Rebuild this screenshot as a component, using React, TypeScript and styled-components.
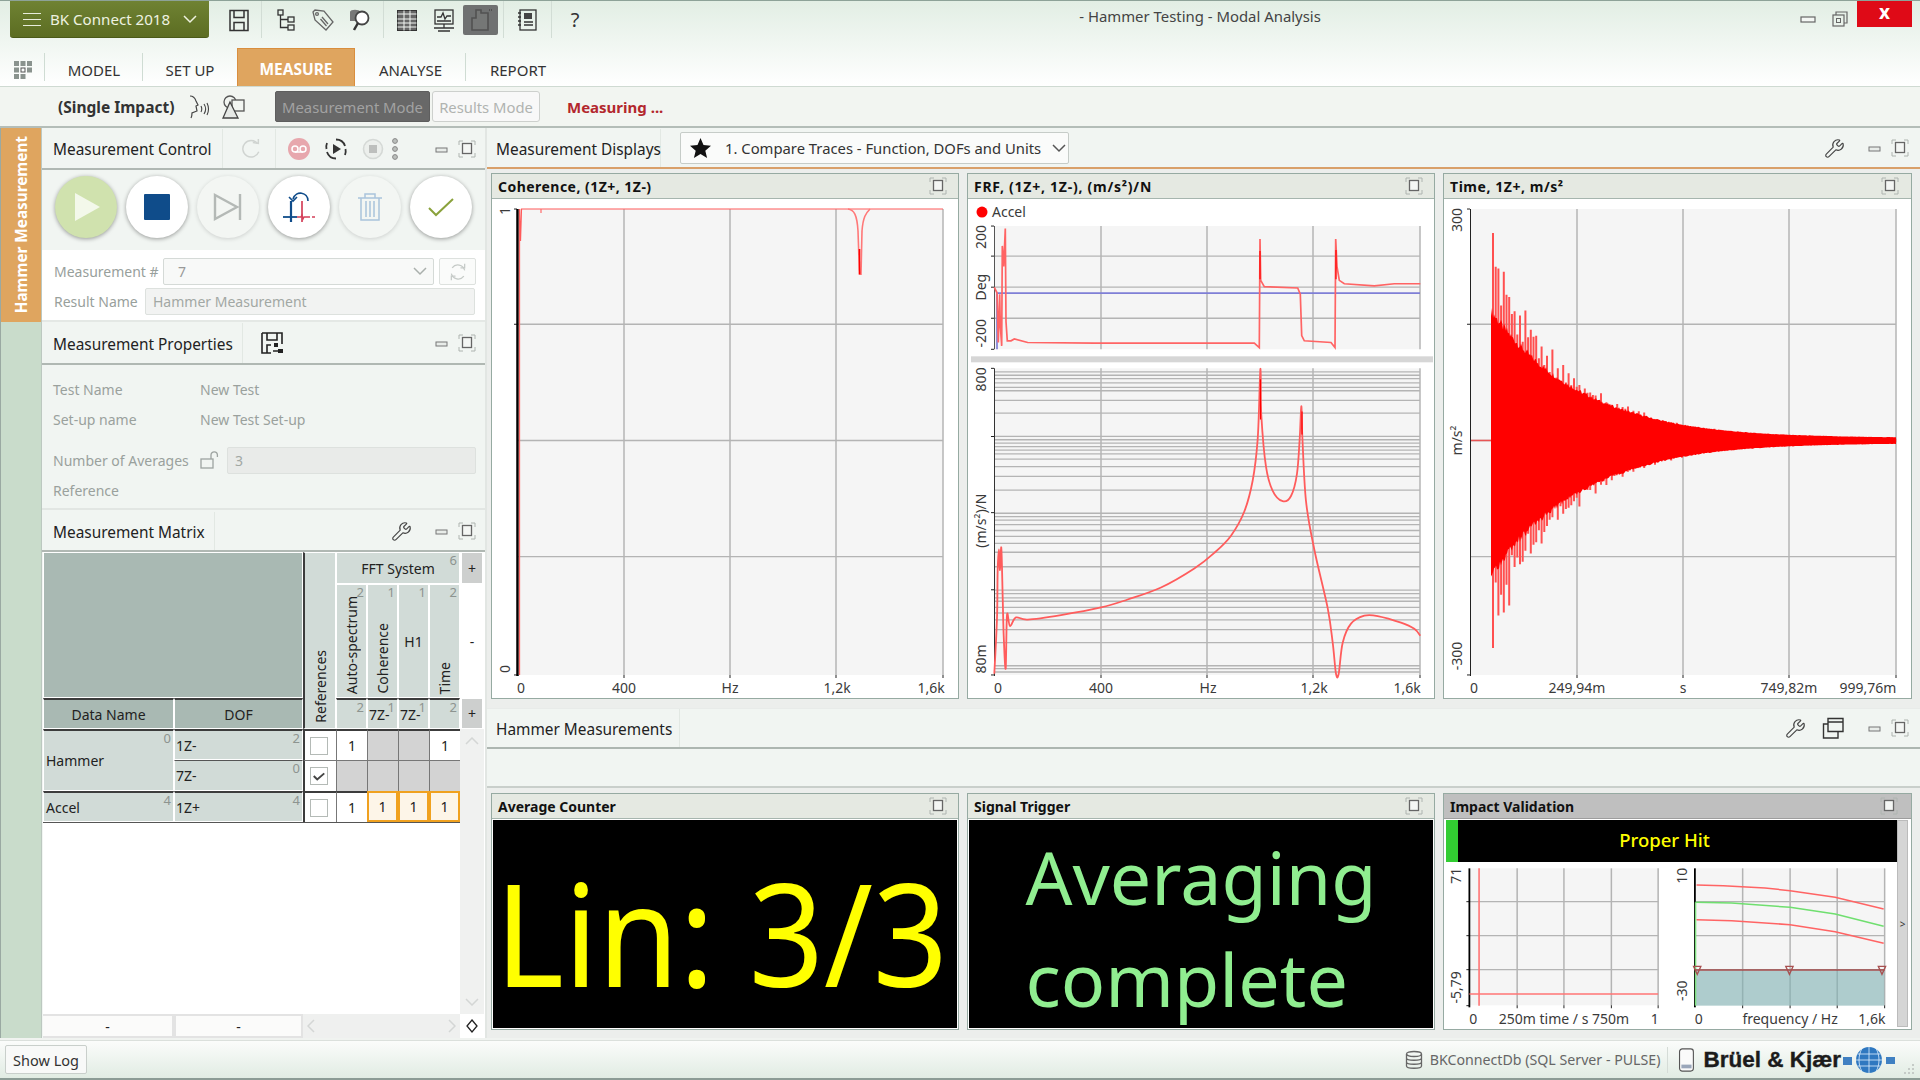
import React, { useMemo } from 'react';
import styled, { createGlobalStyle } from 'styled-components';
import { Wrench } from 'lucide-react';

const FONT = '"Noto Sans", "Open Sans", "Liberation Sans", sans-serif';

const Global = createGlobalStyle`
  html, body { margin: 0; padding: 0; background: #f0f3f0; }
  * { box-sizing: border-box; }
  body { font-family: ${FONT}; }
`;

const Root = styled.div`
  width: 1920px; height: 1080px; overflow: hidden;
  display: flex; flex-direction: column;
  font-family: ${FONT}; font-size: 14px; color: #222;
`;

/* ---------- top ---------- */
const TopBar = styled.header`
  height: 87px; flex: none;
  background: linear-gradient(#e2eee4, #fff);
  border-top: 1px solid #8da298;
  border-bottom: 1px solid #cfdad2;
  display: flex; flex-direction: column;
`;
const TitleRow = styled.div`
  height: 47px; display: flex; align-items: flex-start;
`;
const MenuButton = styled.div`
  margin-left: 10px; width: 199px; height: 37px;
  background: linear-gradient(#6f8233, #5c6d22);
  border-bottom: 1px solid #4a5a18;
  border-radius: 0 0 3px 3px;
  color: #eef2e0; font-size: 15.1px;
  display: flex; align-items: center; gap: 9px; padding-left: 13px;
`;
const Burger = styled.span`
  width: 18px; height: 13px; flex: none;
  border-top: 1px solid #e8eddc; border-bottom: 1px solid #e8eddc; position: relative;
  &::after { content: ''; position: absolute; left: 0; right: 0; top: 5px; border-top: 1px solid #e8eddc; }
`;
const Chevron = styled.svg`
  width: 14px; height: 9px; margin-left: 4px; flex: none;
`;
const QuickTools = styled.div`
  display: flex; align-items: center; height: 37px; padding-left: 7px; width: 391px; flex: none;
`;
const ToolSlot = styled.div<{ $w: number; $dark?: boolean; $sep?: boolean }>`
  width: ${p => p.$w}px; height: ${p => (p.$dark ? 30 : 37)}px; flex: none;
  display: flex; align-items: center; justify-content: center;
  background: ${p => (p.$dark ? '#6f7171' : 'transparent')};
  border-radius: ${p => (p.$dark ? '2px' : '0')};
  border-right: ${p => (p.$sep ? '1px solid #d2ddd5' : '0')};
  color: #333; font-size: 20px;
`;
const WindowTitle = styled.div`
  flex: 1; text-align: center; padding-top: 5px; font-size: 14.9px; color: #444;
`;
const WindowControls = styled.div`
  display: flex; align-items: flex-start; width: 120px; flex: none;
`;
const WinIcon = styled.svg`
  width: 16px; height: 16px; margin: 10px 16px 0 0; flex: none;
  &:nth-child(2) { margin-right: 9px; }
`;
const CloseButton = styled.div`
  width: 55px; height: 26px; background: #df0a17; color: #fff; font-weight: 700; font-size: 19px;
  display: flex; align-items: center; justify-content: center; line-height: 1; padding-bottom: 3px;
`;
const TabRow = styled.nav`
  height: 38px; display: flex; align-items: stretch;
`;
const TabSlot = styled.div<{ $w: number; $sep?: boolean }>`
  width: ${p => p.$w}px; flex: none; position: relative; padding-top: 6px;
  display: flex; align-items: center; justify-content: center;
  font-size: 15px; color: #333;
  &::after {
    content: ''; position: absolute; right: 0; top: 5px; bottom: 5px;
    border-right: ${p => (p.$sep ? '1px solid #cfdcd3' : '0')};
  }
`;
const ActiveTab = styled.div`
  width: 118px; flex: none; background: #dfa55f; border: 1px solid #d98e3e; border-bottom: 0;
  color: #fff; font-weight: 700; font-size: 15.5px; padding-top: 2px;
  display: flex; align-items: center; justify-content: center;
`;
const ModeRow = styled.div`
  height: 41px; flex: none; background: #f2f5f1; border-bottom: 2px solid #b4bdb8;
  display: flex; align-items: center; padding-left: 58px;
`;
const ModeName = styled.div`
  font-weight: 700; font-size: 15.5px; width: 126px; color: #333; white-space: nowrap;
`;
const ModeIcon = styled.svg`
  width: 26px; height: 26px; flex: none; margin-right: 11px;
`;
const ModeDark = styled.div`
  margin-left: 17px; width: 155px; height: 31px; background: #686868; border: 1px solid #5e5e5e; border-radius: 2px;
  color: #a2a2a2; font-size: 14.8px; display: flex; align-items: center; justify-content: center; white-space: nowrap;
`;
const ModeLight = styled.div`
  margin-left: 2px; width: 108px; height: 31px; background: #f8f8f8; border: 1px solid #cdd0cd; border-radius: 3px;
  color: #b0b3b0; font-size: 14.8px; display: flex; align-items: center; justify-content: center; white-space: nowrap;
`;
const Measuring = styled.div`
  margin-left: 27px; color: #b3272d; font-weight: 700; font-size: 15px;
`;

/* ---------- main ---------- */
const Main = styled.main`
  flex: 1; min-height: 0; display: flex; align-items: stretch;
`;
const SideStrip = styled.aside`
  width: 42px; flex: none; display: flex; flex-direction: column;
  background: #c9dccb; border-left: 1px solid #9aa9a2; border-right: 1px solid #bcc8c0;
`;
const SideTab = styled.div`
  height: 194px; background: #dfa55f; color: #fff; font-weight: 700; font-size: 15.3px;
  display: flex; align-items: center; justify-content: center;
  span { writing-mode: vertical-rl; transform: rotate(180deg); white-space: nowrap; }
`;
const LeftPanel = styled.section`
  width: 445px; flex: none; display: flex; flex-direction: column;
  background: #f1f5f2; border-right: 2px solid #e2e6e3;
`;
const PanelHead = styled.div<{ $h: number; $pt?: number }>`
  height: ${p => p.$h}px; flex: none; display: flex; align-items: center;
  padding-top: ${p => p.$pt || 0}px;
  background: #f1f5f2; border-bottom: 2px solid #b0b8b3;
`;
const HeadTitle = styled.div<{ $w: number; $pl?: number; $pt?: number }>`
  width: ${p => p.$w}px; flex: none; height: 100%; padding-left: ${p => p.$pl ?? 11}px; padding-top: ${p => p.$pt || 0}px;
  display: flex; align-items: center; font-size: 15.4px; color: #222; white-space: nowrap;
  border-right: 1px solid #e2e8e3;
`;
const HeadIcon = styled.div<{ $w: number; $sep?: boolean; $pl?: number }>`
  width: ${p => p.$w}px; flex: none; height: 100%;
  padding-left: ${p => p.$pl || 0}px;
  display: flex; align-items: center; justify-content: center;
  border-right: ${p => (p.$sep ? '1px solid #e2e8e3' : '0')};
`;
const Spacer = styled.div`flex: 1;`;
const RoundRow = styled.div`
  height: 80px; flex: none; padding: 6px 0 0 13px; display: flex; gap: 9px;
`;
const RoundButton = styled.div<{ $bg?: string; $muted?: boolean }>`
  width: 62px; height: 62px; border-radius: 50%; flex: none;
  background: ${p => p.$bg || '#fff'};
  box-shadow: 0 1px 4px rgba(0,0,0,${p => (p.$muted ? 0.15 : 0.38)});
  display: flex; align-items: center; justify-content: center;
`;
const FormBlock = styled.div`
  height: 72px; flex: none; background: #fff; padding: 8px 9px 0 12px;
  display: flex; flex-direction: column; gap: 3px;
  border-bottom: 2px solid #e4e8e5;
`;
const FormLine = styled.div`
  display: flex; align-items: center; height: 27px; color: #98a09c; font-size: 14px;
`;
const LineLabel = styled.div<{ $w: number }>`
  width: ${p => p.$w}px; flex: none; white-space: nowrap;
`;
const SelectBox = styled.div`
  width: 271px; height: 27px; border: 1px solid #d5dad7; border-radius: 2px; background: #f8f9f8;
  display: flex; align-items: center; justify-content: space-between; padding: 0 6px 0 14px; color: #999;
`;
const SquareButton = styled.div`
  margin-left: 5px; width: 37px; height: 27px; border: 1px solid #dde1de; border-radius: 2px;
  display: flex; align-items: center; justify-content: center; background: #fafbfa;
`;
const ReadBox = styled.div<{ $w: number; $bg?: string }>`
  width: ${p => p.$w}px; height: 27px; background: ${p => p.$bg || '#f2f3f2'}; border: 1px solid #dde1de; border-radius: 2px;
  display: flex; align-items: center; padding-left: 7px; color: #a2a8a4;
`;
const PropsBody = styled.div`
  height: 145px; flex: none; padding: 9px 9px 0 11px; color: #9aa19d; font-size: 14px;
  border-bottom: 2px solid #e2e6e3;
`;
const PropLine = styled.div<{ $h: number; $mt?: number }>`
  display: flex; align-items: center; height: ${p => p.$h}px; margin-top: ${p => p.$mt || 0}px;
`;
const LockSlot = styled.div`
  width: 27px; flex: none; display: flex;
`;

/* matrix */
const Matrix = styled.div`
  flex: 1; min-height: 0; margin-left: 1px; display: grid; background: #fff;
  grid-template-columns: 131px 129px 33px 31px 31px 31px 31px 24px;
  grid-template-rows: 32px 114px 31px 31px 31px 31px 1fr 24px;
`;
const Cell = styled.div<{ $c: string; $r: string; $bg?: string; $top?: boolean; $left?: boolean; $thin?: boolean; $pad?: string; $align?: string; $start?: boolean }>`
  grid-column: ${p => p.$c}; grid-row: ${p => p.$r};
  position: relative; background: ${p => p.$bg || '#d1dbd7'};
  border: 1px solid #fff;
  border-top: ${p => (p.$top ? '2px solid #3c3c3c' : p.$thin ? '1px solid #555' : '1px solid #fff')};
  border-left: ${p => (p.$left ? '2px solid #3c3c3c' : '1px solid #fff')};
  display: flex; align-items: ${p => p.$align || 'center'}; justify-content: ${p => (p.$start ? 'flex-start' : 'center')};
  padding: ${p => p.$pad || '0'};
  font-size: 14px; color: #222; white-space: nowrap;
`;
const Vertical = styled.span`
  writing-mode: vertical-rl; transform: rotate(180deg); font-size: 14px;
`;
const Count = styled.span`
  position: absolute; right: 2px; top: 0; font-size: 13px; line-height: 15px; color: #8d9490;
`;
const ValueCell = styled.div<{ $c: number; $r: number; $hit?: boolean; $empty?: boolean; $top?: boolean }>`
  grid-column: ${p => p.$c}; grid-row: ${p => p.$r};
  background: ${p => (p.$empty ? '#d3d3d3' : p.$hit ? '#fdf5e8' : '#fff')};
  border: ${p => (p.$hit ? '2px solid #f0a11f' : '0')};
  border-top: ${p => (p.$hit ? '2px solid #f0a11f' : p.$top ? '2px solid #3c3c3c' : '1px solid #777')};
  border-left: ${p => (p.$hit ? '2px solid #f0a11f' : '1px solid #777')};
  display: flex; align-items: center; justify-content: center; font-size: 14px;
`;
const CheckCell = styled.div<{ $r: number; $top?: boolean }>`
  grid-column: 3; grid-row: ${p => p.$r}; background: #fff;
  border-left: 2px solid #3c3c3c; padding-right: 4px;
  border-top: ${p => (p.$top ? '2px solid #3c3c3c' : '1px solid #777')};
  display: flex; align-items: center; justify-content: center;
`;
const CheckBox = styled.div`
  width: 18px; height: 18px; border: 1px solid #b4bab6; background: #fff;
  display: flex; align-items: center; justify-content: center;
`;
const SideButton = styled.div<{ $r: number; $white?: boolean }>`
  grid-column: 8; grid-row: ${p => p.$r}; background: ${p => (p.$white ? '#fff' : '#cdcfce')};
  margin: 1px 2px; display: flex; align-items: center; justify-content: center; font-size: 14px;
`;
const SideScroll = styled.div`
  grid-column: 8; grid-row: 4 / 8; background: #f0f1f0; padding: 8px 0;
  display: flex; flex-direction: column; justify-content: space-between; align-items: center;
`;
const BottomCell = styled.div<{ $c: number }>`
  grid-column: ${p => p.$c}; grid-row: 8; background: #fbfbfa;
  border: 2px solid #e3e3e3; border-left: ${p => (p.$c === 1 ? '0' : '2px solid #e3e3e3')}; display: flex; align-items: center; justify-content: center;
`;
const BottomScroll = styled.div`
  grid-column: 3 / 8; grid-row: 8; background: #eff0ef; padding: 0 4px;
  display: flex; align-items: center; justify-content: space-between;
`;
const Diamond = styled.div`
  grid-column: 8; grid-row: 8; background: #fff; margin: 1px;
  display: flex; align-items: center; justify-content: center;
`;
const Filler = styled.div`
  grid-column: 1 / 8; grid-row: 7; background: #fff; border-top: 1px solid #555;
`;

/* right */
const RightArea = styled.section`
  flex: 1; min-width: 0; display: flex; flex-direction: column; background: #eceeec;
`;
const DisplaysHead = styled.div`
  height: 41px; flex: none; display: flex; align-items: center; background: #f1f5f2; padding-top: 1px;
  border-bottom: 2px solid #d9a06a;
`;
const Compare = styled.div`
  margin-left: 19px; width: 389px; height: 32px; background: #fafbfa; border: 1px solid #c6ccc8; border-radius: 2px;
  display: flex; align-items: center; padding: 0 2px 0 9px; font-size: 14.8px; color: #333;
`;
const CompareText = styled.span`
  flex: 1; padding-left: 14px; white-space: nowrap;
`;
const PanelRow = styled.div<{ $h: number; $top: number }>`
  height: ${p => p.$h}px; flex: none; margin-top: ${p => p.$top}px;
  padding: 0 9px 0 4px; display: grid; grid-template-columns: 468px 468px 469px; gap: 8px;
`;
const Card = styled.article`
  background: #fff; border: 1px solid #96aaa2; display: flex; flex-direction: column; min-height: 0;
`;
const CardHead = styled.div<{ $active?: boolean; $pr?: number }>`
  height: 25px; flex: none; background: ${p => (p.$active ? '#bfbfbf' : '#e5e9e2')};
  border-bottom: 1px solid ${p => (p.$active ? '#9d9d9d' : '#a6b5ae')};
  display: flex; align-items: center; justify-content: space-between; padding: 0 ${p => p.$pr ?? 11}px 0 6px;
  font-weight: 700; font-size: 14px; color: #111;
`;
const WideTitle = styled.span<{ $sp: number }>`
  letter-spacing: ${p => p.$sp}px;
`;
const ChartSvg = styled.svg`
  display: block; flex: 1; width: 100%; min-height: 0;
`;
const AxisText = styled.text`
  font-family: ${FONT}; font-size: 14px; fill: #3a3a3a;
`;
const MiddleHead = styled.div`
  height: 41px; flex: none; margin-top: 9px; display: flex; align-items: center; background: #f1f5f2;
  border-bottom: 2px solid #adb6b1; border-top: 1px solid #e8ebe9;
`;
const MiddleBand = styled.div`
  height: 39px; flex: none; background: #f1f5f2; border-bottom: 2px solid #c9cfcb;
`;
const BlackBody = styled.div`
  flex: 1; min-height: 0; margin: 1px; background: #000; display: flex; align-items: center; justify-content: center;
`;
const StateBody = styled(BlackBody)`
  align-items: flex-start; padding-top: 13px;
`;
const BigCount = styled.div`
  color: #ff0; font-size: 143px; line-height: 1; padding: 14px 7px 0 0; white-space: nowrap;
  transform: scaleX(0.92);
`;
const BigState = styled.div`
  color: #90ee90; font-size: 73.6px; display: flex; flex-direction: column; gap: 14px; white-space: nowrap;
`;
const StateLine = styled.span`
  display: block; line-height: 88px;
`;
const ImpactBody = styled.div`
  flex: 1; min-height: 0; display: flex; padding: 1px 3px 0 2px;
`;
const ImpactMain = styled.div`
  flex: 1; min-width: 0; display: flex; flex-direction: column;
`;
const HitBar = styled.div`
  height: 42px; flex: none; background: #000; display: flex; border-left: 12px solid #32cd32;
  align-items: center; justify-content: center; color: #ff0; font-size: 18.5px; font-weight: 500; padding: 0 26px 4px 0;
`;
const ImpactScroll = styled.div`
  width: 11px; flex: none; background: #d5d5d5; border: 1px solid #bbb; margin-bottom: 2px;
  display: flex; align-items: center; justify-content: center; font-size: 10px; color: #333;
`;
const ImpactSvg = styled.svg`
  flex: 1; display: block; width: 100%; min-height: 0;
`;

/* status */
const StatusBar = styled.footer`
  height: 40px; flex: none; margin-top: 2px;
  background: linear-gradient(#fbfcfb, #e1ece3); border-top: 1px solid #dbe0dc; border-bottom: 2px solid #8c9c95;
  display: flex; align-items: center; padding: 0 3px 0 5px;
`;
const ShowLog = styled.div`
  width: 82px; height: 29px; background: #f8f9f8; border: 1px solid #c9cfcb; border-radius: 2px;
  display: flex; align-items: center; justify-content: center; font-size: 14.5px; color: #333;
`;
const DbText = styled.div`
  font-size: 14.2px; color: #666; margin-left: 6px; padding-right: 7px; white-space: nowrap; border-right: 1px solid #d5dcd7; height: 26px; display: flex; align-items: center;
`;
const PhoneSlot = styled.div`
  margin-left: 6px; width: 24px; flex: none; display: flex;
`;
const Brand = styled.div`
  font-family: "Liberation Sans", Arial, sans-serif; font-weight: 700; font-size: 22.5px; color: #1b1b1b; margin-left: 5px; white-space: nowrap; -webkit-text-stroke: 0.4px #1b1b1b;
`;
const LogoSvg = styled.svg`
  width: 52px; height: 30px; margin-left: 2px; flex: none;
`;
const GripSlot = styled.div`
  width: 22px; height: 100%; flex: none; display: flex; align-items: flex-end; justify-content: flex-end; padding: 0 1px 2px 0;
`;

/* ---------- small icons ---------- */
const s = { fill: 'none', stroke: '#333', strokeWidth: 1.3 } as const;
const IconSvg = styled.svg<{ $size?: number }>`
  width: ${p => p.$size || 24}px; height: ${p => p.$size || 24}px; display: block; flex: none;
`;
const MinIcon = () => (
  <IconSvg viewBox="0 0 14 14" $size={14}><rect x="1" y="6" width="11" height="4" fill="#e8ece9" stroke="#777" /></IconSvg>
);
const MaxIcon = () => (
  <IconSvg viewBox="0 0 18 18" $size={18}>
    <rect x="4.5" y="3.5" width="9" height="10" fill="#f4f6f4" stroke="#666" strokeWidth="1.3" />
    <path d="M1 5V1h4M13 1h4v4M17 13v4h-4M5 17H1v-4" fill="none" stroke="#aeb4b0" />
  </IconSvg>
);
const SaveIcon = () => (
  <IconSvg viewBox="0 0 24 24"><path d="M3 2.5h18v20H3zM7 2.5v7h10v-7M7 22.500v-8h10v8" {...s} strokeWidth={1.5} /></IconSvg>
);
const TreeIcon = () => (
  <IconSvg viewBox="0 0 24 24"><rect x="4" y="2" width="5" height="5" {...s} /><rect x="14" y="9" width="6" height="5" {...s} /><rect x="14" y="17" width="6" height="5" {...s} /><path d="M6.5 7v12.5H14M6.5 11.5H14" {...s} /></IconSvg>
);
const TagIcon = () => (
  <IconSvg viewBox="0 0 24 24"><path d="M2 4l2-2 9 1 9 11-7 8-11-10z" {...s} stroke="#666" /><circle cx="6" cy="6" r="1.4" {...s} stroke="#666" /><path d="M11 9l6 7M9.5 11l6 7" {...s} stroke="#666" /></IconSvg>
);
const SearchDbIcon = () => (
  <IconSvg viewBox="0 0 24 24"><path d="M2 4c0-3 10-3 10 0v9H2z" fill="#777" /><circle cx="14" cy="10" r="6.5" fill="#fff" stroke="#444" strokeWidth="1.8" /><path d="M10 15l-4 7" stroke="#333" strokeWidth="2.5" /></IconSvg>
);
const TableIcon = () => (
  <IconSvg viewBox="0 0 24 24"><rect x="2.5" y="2.5" width="19" height="20" fill="#666" stroke="#333" /><path d="M2.5 6h19M9 2.5v20M15 2.5v20M2.5 11h19M2.5 15h19M2.5 19h19" stroke="#f3f6f3" strokeWidth="1" /></IconSvg>
);
const MonitorIcon = () => (
  <IconSvg viewBox="0 0 24 24"><rect x="3" y="2" width="18" height="14" {...s} /><path d="M5 9l4 0 2-4 2 6 2-3h4M5 13h14M12 16v4M2 20h20M6 23h12" {...s} /></IconSvg>
);
const BoardIcon = () => (
  <IconSvg viewBox="0 0 28 28" $size={28}><path d="M9 4h5v3h7v17H5V12h4z" fill="#757776" stroke="#525252" strokeWidth="1.6" /><path d="M22 4h3" stroke="#525252" strokeWidth="2" strokeDasharray="1 1" /></IconSvg>
);
const NotebookIcon = () => (
  <IconSvg viewBox="0 0 24 24"><rect x="4" y="2" width="16" height="20" {...s} /><rect x="8" y="5" width="8" height="6" fill="#444" /><path d="M8 14h9M8 17h9M2 5h3M2 9h3M2 13h3M2 17h3" {...s} /></IconSvg>
);
const RefreshIcon = ({ c = '#d0d4d1', size = 22 }: { c?: string; size?: number }) => (
  <IconSvg viewBox="0 0 24 24" $size={size}><path d="M19 6a9 9 0 1 0 1.5 9" fill="none" stroke={c} strokeWidth="1.6" /><path d="M14 5l6 1 0-5" fill="none" stroke={c} strokeWidth="1.6" /></IconSvg>
);
const VoiceIcon = () => (
  <IconSvg viewBox="0 0 24 24"><circle cx="12" cy="12" r="11" fill="#e7a7ad" /><circle cx="8" cy="12" r="3" fill="none" stroke="#fff" strokeWidth="1.5" /><circle cx="16" cy="12" r="3" fill="none" stroke="#fff" strokeWidth="1.5" /><path d="M8 15h8" stroke="#fff" strokeWidth="1.5" /></IconSvg>
);
const CyclePlayIcon = () => (
  <IconSvg viewBox="0 0 24 24"><path d="M12 2.5a9.5 9.5 0 0 1 9 6.5M12 21.5a9.5 9.5 0 0 1-9-6.5" fill="none" stroke="#333" strokeWidth="1.8" /><path d="M3 6a10 10 0 0 0-.5 6M21 18a10 10 0 0 0 .5-6" fill="none" stroke="#333" strokeWidth="1.8" /><path d="M9 7l8 5-8 5z" fill="#333" /></IconSvg>
);
const CycleStopIcon = () => (
  <IconSvg viewBox="0 0 24 24"><circle cx="12" cy="12" r="9.5" fill="#ecefec" stroke="#d5d9d6" strokeWidth="1.6" /><rect x="8" y="8" width="8" height="8" fill="#bdbfbd" /></IconSvg>
);
const DotsIcon = () => (
  <IconSvg viewBox="0 0 8 24" $size={24}><g fill="#bbbfbc" stroke="#888"><circle cx="4" cy="4" r="2.4" /><circle cx="4" cy="12" r="2.4" /><circle cx="4" cy="20" r="2.4" /></g></IconSvg>
);
const FloppyTreeIcon = () => (
  <IconSvg viewBox="0 0 24 24"><path d="M2 2h20v11M2 2v20h9M7 2v7h10V2M7 22v-8h4" fill="none" stroke="#222" strokeWidth="1.6" /><rect x="14" y="12" width="4" height="4" fill="#222" /><rect x="18" y="18" width="5" height="4" fill="#222" /><path d="M13 20h5" stroke="#222" strokeWidth="1.5" /></IconSvg>
);
const LockIcon = () => (
  <IconSvg viewBox="0 0 20 20" $size={20}><rect x="1" y="9" width="12" height="9" fill="none" stroke="#9da3a0" strokeWidth="1.3" /><path d="M11 9V5a3.2 3.2 0 0 1 6.4 0v2" fill="none" stroke="#9da3a0" strokeWidth="1.3" /></IconSvg>
);
const TwoWinIcon = () => (
  <IconSvg viewBox="0 0 24 24"><path d="M7 2.5h15v13H7zM7 6h15" fill="none" stroke="#333" strokeWidth="1.4" /><path d="M7 8H2.5v14H17v-6.5" fill="none" stroke="#333" strokeWidth="1.4" /></IconSvg>
);
const WrenchIcon = () => <Wrench size={21} strokeWidth={1.3} color="#444" />;
const ChevronDown = ({ c = '#777' }: { c?: string }) => (
  <Chevron viewBox="0 0 14 9"><path d="M1 1l6 6 6-6" fill="none" stroke={c} strokeWidth="1.5" /></Chevron>
);

/* ---------- chart helpers ---------- */
type Pt = [number, number];
const toPath = (p: Pt[]) => 'M' + p.map(q => `${q[0].toFixed(1)},${q[1].toFixed(1)}`).join('L');
const smooth = (p: Pt[]) => {
  let d = `M${p[0][0].toFixed(1)},${p[0][1].toFixed(1)}`;
  for (let i = 0; i < p.length - 1; i += 1) {
    const a = p[i - 1] || p[i], b = p[i], c = p[i + 1], e = p[i + 2] || c;
    d += `C${(b[0] + (c[0] - a[0]) / 6).toFixed(1)},${(b[1] + (c[1] - a[1]) / 6).toFixed(1)} ${(c[0] - (e[0] - b[0]) / 6).toFixed(1)},${(c[1] - (e[1] - b[1]) / 6).toFixed(1)} ${c[0].toFixed(1)},${c[1].toFixed(1)}`;
  }
  return d;
};

const Plot = ({ x, y, w, h, vs, hs, ticksX, ticksY }: { x: number; y: number; w: number; h: number; vs: number[]; hs: number[]; ticksX?: number[]; ticksY?: number[] }) => (
  <g>
    <rect x={x} y={y} width={w} height={h} fill="#f5f5f5" />
    {hs.map(v => <line key={'h' + v} x1={x} x2={x + w} y1={v} y2={v} stroke="#b4b4b4" strokeWidth="1.3" />)}
    {vs.map(v => <line key={'v' + v} x1={v} x2={v} y1={y} y2={y + h} stroke="#b4b4b4" strokeWidth="1.5" />)}
    {(ticksX || []).map(v => <line key={'tx' + v} x1={v} x2={v} y1={y + h} y2={y + h + 3} stroke="#222" />)}
    {(ticksY || []).map(v => <line key={'ty' + v} x1={x - 3} x2={x} y1={v} y2={v} stroke="#222" />)}
  </g>
);
const Rot = ({ x, y, children }: { x: number; y: number; children: React.ReactNode }) => (
  <AxisText x={x} y={y} textAnchor="middle" transform={`rotate(-90 ${x} ${y})`}>{children}</AxisText>
);
const Lab = ({ x, y = 493, children }: { x: number; y?: number; children: React.ReactNode }) => (
  <AxisText x={x} y={y} textAnchor="middle">{children}</AxisText>
);

const CoherenceChart = () => (
  <ChartSvg viewBox="0 0 466 498" preserveAspectRatio="none">
    <Plot x={25} y={10} w={426} h={465} vs={[132, 238, 344, 451]} hs={[125, 241, 357]} ticksX={[132, 238, 344, 451]} ticksY={[10, 125, 475]} />
    <line x1={25.5} x2={25.5} y1={10} y2={476} stroke="#000" strokeWidth="2.5" />
    <line x1={27.5} x2={27.5} y1={10} y2={475} stroke="#ff6b6b" strokeWidth="1.3" />
    <path d="M27.500,10 L28.500,42 L29.500,10 L451,10" fill="none" stroke="#ff5a5a" strokeWidth="1.2" />
    <path d="M356,10 C362,11 365,15 366,32 L367.5,75 L369,75 L370,32 C371,18 374,14 378,10" fill="none" stroke="#ff7878" strokeWidth="1.6" />
    <path d="M367.5,50 L367.6,75" stroke="#f00" strokeWidth="1.6" />
    <path d="M49,10v4" stroke="#ff6b6b" strokeWidth="1.2" />
    <Rot x={18} y={12}>1</Rot>
    <Rot x={18} y={469}>0</Rot>
    <Lab x={29}>0</Lab><Lab x={132}>400</Lab><Lab x={238}>Hz</Lab><Lab x={345}>1,2k</Lab><Lab x={439}>1,6k</Lab>
  </ChartSvg>
);

const mapFrf = (a: number[][]): Pt[] => a.map(([x, y]) => [x / 3 - 7, y / 2.904 - 29]);
const phase = [[100,340],[108,356],[112,500],[116,360],[118,450],[122,510],[124,220],[128,280],[133,170],[135,440],[139,495],[150,495],[160,490],[200,500],[400,502],[880,502],[895,515],[897,200],[899,320],[910,338],[1010,342],[1018,360],[1022,480],[1030,495],[1110,500],[1122,515],[1124,200],[1128,280],[1135,320],[1150,330],[1240,336],[1300,330],[1378,330]];
const magnitude = [[100,1460],[108,1300],[110,1160],[114,1100],[117,1160],[121,1095],[125,1240],[128,1350],[134,1445],[138,1290],[147,1322],[165,1297],[200,1303],[300,1290],[420,1268],[500,1245],[600,1210],[700,1155],[760,1110],[810,1060],[850,990],[875,900],[890,780],[897,600],[899,590],[901,710],[915,860],[935,930],[965,960],[990,945],[1008,880],[1016,780],[1021,685],[1024,770],[1035,960],[1060,1100],[1100,1270],[1115,1370],[1125,1460],[1133,1460],[1145,1370],[1170,1315],[1210,1292],[1250,1293],[1320,1312],[1360,1330],[1378,1350]];
const logLines = [585,595,605,617,630,640,668,705,772,782,792,802,812,823,838,860,888,928,995,1005,1015,1028,1045,1062,1082,1108,1150,1218,1228,1240,1250,1268,1284,1304,1332,1370,1437,1445,1455].map(y => y / 2.904 - 29);

const FrfChart = () => (
  <ChartSvg viewBox="0 0 466 498" preserveAspectRatio="none">
    <circle cx={14} cy={13} r={5.5} fill="#f00" />
    <AxisText x={24} y={18}>Accel</AxisText>
    <Plot x={26} y={27} w={426} h={123} vs={[133, 239, 345, 452]} hs={[57, 88, 119]} ticksY={[27, 57, 88, 119, 150]} />
    <line x1={26.5} x2={26.5} y1={27} y2={150} stroke="#555" />
    <path d="M29,94 H452 M29,94 V150" fill="none" stroke="#7f7fd6" strokeWidth="1.7" />
    <path d={toPath(mapFrf(phase))} fill="none" stroke="#ff6464" strokeWidth="1.7" />
    <path d="M292,52V80M368,51V80" stroke="#f00" strokeWidth="1.2" />
    <rect x={3} y={157} width={462} height={6} fill="#d6d6d6" />
    <Plot x={26} y={169} w={426} h={306} vs={[133, 239, 345, 452]} hs={logLines} ticksX={[133, 239, 345, 452]} ticksY={[169, 237, 313, 390, 475]} />
    <line x1={26.5} x2={26.5} y1={169} y2={476} stroke="#333" />
    <path d={smooth(mapFrf(magnitude))} fill="none" stroke="#ff5c5c" strokeWidth="1.8" />
    <path d="M292.5,180V220M334,212V235" stroke="#f00" strokeWidth="1.2" />
    <Rot x={18} y={38}>200</Rot><Rot x={18} y={88}>Deg</Rot><Rot x={18} y={134}>-200</Rot>
    <Rot x={18} y={180}>800</Rot><Rot x={18} y={321}>(m/s²)/N</Rot><Rot x={18} y={459}>80m</Rot>
    <Lab x={30}>0</Lab><Lab x={133}>400</Lab><Lab x={240}>Hz</Lab><Lab x={346}>1,2k</Lab><Lab x={439}>1,6k</Lab>
  </ChartSvg>
);

const rnd = (i: number) => { const v = Math.sin(i * 12.9898) * 43758.5453; return v - Math.floor(v); };

const TimeChart = () => {
  const { solid, spikes } = useMemo(() => {
    const x0 = 47, cy = 241, end = 452, top: Pt[] = [], bot: Pt[] = [];
    const peak = (x: number) => 206 * Math.exp(-(x - x0 - 2) / 75);
    for (let x = x0, i = 0; x <= end; x += 1, i += 1) {
      const dx = x - x0;
      const a = (0.6 + 0.2 * Math.min(1, dx / 150)) * peak(x) + 2;
      top.push([x, cy - a * (0.96 + 0.08 * rnd(i)) - 0.5]);
      bot.unshift([x, cy + a * (1 + 0.08 * rnd(i + 500)) + 0.5]);
    }
    let d = '';
    for (let x = x0 + 2, i = 0; x < end; x += 2.7, i += 1) {
      const p = peak(x);
      const scale = i % 2 === 0 ? 0.8 + 0.2 * rnd(i + 40) : 0.68 + 0.2 * rnd(i + 40);
      const scale2 = i % 2 === 0 ? 0.8 + 0.2 * rnd(i + 90) : 0.68 + 0.2 * rnd(i + 90);
      d += `M${x.toFixed(1)},${(cy - p * (i === 0 ? 1 : scale) - 1).toFixed(1)}V${(cy + p * (i === 0 ? 1 : scale2) + 1).toFixed(1)}`;
    }
    return { solid: toPath([...top, ...bot]) + 'Z', spikes: d };
  }, []);
  return (
    <ChartSvg viewBox="0 0 467 498" preserveAspectRatio="none">
      <Plot x={26} y={10} w={426} h={465} vs={[133, 239, 345, 452]} hs={[125, 241, 357]} ticksX={[133, 239, 345, 452]} ticksY={[10, 125, 475]} />
      <line x1={26.5} x2={26.5} y1={10} y2={476} stroke="#222" />
      <line x1={27} x2={47} y1={241} y2={241} stroke="#e85555" strokeWidth="1.5" />
      <path d={spikes} fill="none" stroke="#ff5050" strokeWidth="2" />
      <path d={solid} fill="#f00" />
      <Rot x={18} y={21}>300</Rot><Rot x={18} y={241}>m/s²</Rot><Rot x={18} y={456}>-300</Rot>
      <Lab x={30}>0</Lab><Lab x={133}>249,94m</Lab><Lab x={239}>s</Lab><Lab x={345}>749,82m</Lab><Lab x={424}>999,76m</Lab>
    </ChartSvg>
  );
};

const iv = (a: number[][]): Pt[] => a.map(([x, y]) => [x / 3 - 15, y / 3 - 83]);
const ImpactChart = () => {
  const X = (v: number) => v / 3 - 15, Y = (v: number) => v / 3 - 83;
  return (
    <ImpactSvg viewBox="0 0 450 167" preserveAspectRatio="none">
      <Plot x={X(115)} y={Y(268)} w={188.5} h={137} vs={[X(258), X(398), X(540), X(680)]} hs={[Y(368), Y(470), Y(572)]} ticksX={[X(258), X(398), X(540), X(680)]} ticksY={[Y(368), Y(470), Y(572), Y(680)]} />
      <line x1={X(115)} x2={X(115)} y1={Y(268)} y2={Y(685)} stroke="#000" strokeWidth="1.8" />
      <line x1={X(144)} x2={X(144)} y1={Y(268)} y2={Y(680)} stroke="#ff7575" strokeWidth="1.6" />
      <line x1={X(115)} x2={X(680)} y1={Y(645)} y2={Y(645)} stroke="#ff7575" strokeWidth="1.6" />
      <Rot x={X(90)} y={Y(290)}>71</Rot>
      <Rot x={X(90)} y={Y(625)}>-5,79</Rot>
      <Lab x={X(127)} y={162}>0</Lab>
      <Lab x={X(398)} y={162}>250m time / s 750m</Lab>
      <Lab x={X(670)} y={162}>1</Lab>
      <Plot x={X(790)} y={Y(268)} w={189} h={137} vs={[X(933), X(1075), X(1216), X(1358)]} hs={[Y(368), Y(470), Y(572)]} ticksX={[X(933), X(1075), X(1216), X(1358)]} />
      <rect x={X(790)} y={Y(575)} width={189} height={35} fill="#7fb0b3" opacity="0.6" />
      <line x1={X(790)} x2={X(790)} y1={Y(268)} y2={Y(685)} stroke="#000" strokeWidth="1.8" />
      <line x1={X(792)} x2={X(792)} y1={Y(370)} y2={Y(680)} stroke="#7fe07f" strokeWidth="1.5" />
      <line x1={X(790)} x2={X(1358)} y1={Y(573)} y2={Y(573)} stroke="#a04a4a" strokeWidth="1.6" />
      <path d={toPath(iv([[795,318],[875,320],[1000,327],[1075,335],[1210,355],[1355,390]]))} fill="none" stroke="#ff6464" strokeWidth="1.5" />
      <path d={toPath(iv([[792,370],[900,372],[1075,385],[1210,405],[1355,442]]))} fill="none" stroke="#6fdf6f" strokeWidth="1.5" />
      <path d={toPath(iv([[795,422],[900,425],[1075,437],[1210,458],[1355,493]]))} fill="none" stroke="#ff6464" strokeWidth="1.5" />
      {[797, 1073, 1350].map(v => (
        <path key={v} d={`M${X(v - 11)},${Y(562)}h${22 / 3}l${-11 / 3},8z`} fill="none" stroke="#a85050" strokeWidth="1.3" />
      ))}
      <Rot x={X(765)} y={Y(290)}>10</Rot>
      <Rot x={X(765)} y={Y(635)}>-30</Rot>
      <Lab x={X(802)} y={162}>0</Lab>
      <Lab x={X(1075)} y={162}>frequency / Hz</Lab>
      <Lab x={X(1320)} y={162}>1,6k</Lab>
    </ImpactSvg>
  );
};

const CheckTick = () => (
  <IconSvg viewBox="0 0 16 16" $size={14}><path d="M2 8l4 4 8-7" fill="none" stroke="#444" strokeWidth="2.2" /></IconSvg>
);

const App = () => (
  <Root>
    <Global />
    <TopBar>
      <TitleRow>
        <MenuButton>
          <Burger />
          BK Connect 2018
          <ChevronDown c="#eef2e0" />
        </MenuButton>
        <QuickTools>
          <ToolSlot $w={46} $sep><SaveIcon /></ToolSlot>
          <ToolSlot $w={48}><TreeIcon /></ToolSlot>
          <ToolSlot $w={26}><TagIcon /></ToolSlot>
          <ToolSlot $w={48} $sep><SearchDbIcon /></ToolSlot>
          <ToolSlot $w={46}><TableIcon /></ToolSlot>
          <ToolSlot $w={28}><MonitorIcon /></ToolSlot>
          <ToolSlot $w={5} />
          <ToolSlot $w={35} $dark><BoardIcon /></ToolSlot>
          <ToolSlot $w={6} $sep />
          <ToolSlot $w={48} $sep><NotebookIcon /></ToolSlot>
          <ToolSlot $w={46}>?</ToolSlot>
        </QuickTools>
        <WindowTitle>- Hammer Testing - Modal Analysis</WindowTitle>
        <WindowControls>
          <WinIcon viewBox="0 0 16 16"><rect x="1" y="6" width="14" height="5" fill="#f4f7f4" stroke="#666" strokeWidth="1.2" /></WinIcon>
          <WinIcon viewBox="0 0 16 16"><path d="M4 4V1h11v11h-3" fill="none" stroke="#666" strokeWidth="1.2" /><rect x="1" y="4" width="11" height="11" fill="none" stroke="#666" strokeWidth="1.2" /><rect x="4.5" y="7.5" width="4" height="4" fill="none" stroke="#666" /></WinIcon>
          <CloseButton>x</CloseButton>
        </WindowControls>
      </TitleRow>
      <TabRow>
        <TabSlot $w={45} $sep>
          <IconSvg viewBox="0 0 18 18" $size={18}><g fill="#8a938e"><rect x="0" y="0" width="5" height="5" /><rect x="6.5" y="0" width="5" height="5" /><rect x="13" y="0" width="5" height="5" /><rect x="0" y="6.5" width="5" height="5" /><rect x="13" y="6.5" width="5" height="5" /><rect x="0" y="13" width="5" height="5" /><rect x="6.5" y="13" width="5" height="5" /></g><rect x="7" y="7" width="4" height="4" fill="none" stroke="#555" /></IconSvg>
        </TabSlot>
        <TabSlot $w={98} $sep>MODEL</TabSlot>
        <TabSlot $w={94}>SET UP</TabSlot>
        <ActiveTab>MEASURE</ActiveTab>
        <TabSlot $w={111} $sep>ANALYSE</TabSlot>
        <TabSlot $w={104}>REPORT</TabSlot>
      </TabRow>
    </TopBar>
    <ModeRow>
      <ModeName>(Single Impact)</ModeName>
      <ModeIcon viewBox="0 0 26 26"><path d="M6 2c3 0 5 2 6 5l2 4-2 1 1 5-5 2c0 2 0 3-1 5" fill="none" stroke="#444" strokeWidth="1.2" /><path d="M17 12c1 2 1 4 0 6M20 10c2 3 2 7 0 10M23 9c2 4 2 8 0 12" fill="none" stroke="#444" strokeWidth="1.1" /></ModeIcon>
      <ModeIcon viewBox="0 0 26 26"><circle cx="9" cy="8" r="6" fill="none" stroke="#555" strokeWidth="1.3" /><rect x="11" y="6" width="12" height="11" fill="#f2f5f1" stroke="#555" strokeWidth="1.3" /><path d="M9 8L2 24h15z" fill="#e6e9e6" stroke="#444" strokeWidth="1.3" /></ModeIcon>
      <ModeDark>Measurement Mode</ModeDark>
      <ModeLight>Results Mode</ModeLight>
      <Measuring>Measuring ...</Measuring>
    </ModeRow>
    <Main>
      <SideStrip>
        <SideTab><span>Hammer Measurement</span></SideTab>
      </SideStrip>
      <LeftPanel>
        <PanelHead $h={42} $pt={1}>
          <HeadTitle $w={181} $pt={2}>Measurement Control</HeadTitle>
          <HeadIcon $w={53} $sep $pl={4}><RefreshIcon /></HeadIcon>
          <HeadIcon $w={45}><VoiceIcon /></HeadIcon>
          <HeadIcon $w={29}><CyclePlayIcon /></HeadIcon>
          <HeadIcon $w={45}><CycleStopIcon /></HeadIcon>
          <HeadIcon $w={0}><DotsIcon /></HeadIcon>
          <Spacer />
          <HeadIcon $w={25}><MinIcon /></HeadIcon>
          <HeadIcon $w={25}><MaxIcon /></HeadIcon>
          <HeadIcon $w={6} />
        </PanelHead>
        <RoundRow>
          <RoundButton $bg="#d0e2ae">
            <svg width="30" height="30" viewBox="0 0 30 30"><path d="M4 1l25 14L4 29z" fill="#f3f8ea" /></svg>
          </RoundButton>
          <RoundButton><svg width="26" height="26" viewBox="0 0 26 26"><rect width="26" height="26" rx="1" fill="#0f4c8a" /></svg></RoundButton>
          <RoundButton $bg="#f3f6f3" $muted>
            <svg width="30" height="28" viewBox="0 0 30 28"><path d="M2 2l22 12L2 26zM27 1v26" fill="none" stroke="#b4b9b6" strokeWidth="2.4" /></svg>
          </RoundButton>
          <RoundButton>
            <svg width="34" height="36" viewBox="0 0 34 36"><path d="M1 28h14" stroke="#0f4c8a" strokeWidth="1.8" /><path d="M9 12v21" stroke="#0f4c8a" strokeWidth="2.2" /><path d="M15 28h4l1-2 1 4 1-2h6M30 28h3" fill="none" stroke="#d4405a" strokeWidth="1.4" /><path d="M20 12v21" stroke="#d4405a" strokeWidth="1.7" /><path d="M26 12C26 3 14 1 11 10" fill="none" stroke="#0f4c8a" strokeWidth="1.6" /><path d="M7 8l4 4 4-4" fill="none" stroke="#0f4c8a" strokeWidth="1.6" /></svg>
          </RoundButton>
          <RoundButton $bg="#f3f6f3" $muted>
            <svg width="30" height="28" viewBox="0 0 30 28"><path d="M3 5h24M10 5V1h10v4M6 5v22h18V5M11 8v16M15 8v16M19 8v16" fill="none" stroke="#a9c3dc" strokeWidth="1.5" /></svg>
          </RoundButton>
          <RoundButton>
            <svg width="26" height="20" viewBox="0 0 26 20"><path d="M1 11l7 7L25 2" fill="none" stroke="#8aa23c" strokeWidth="2" /></svg>
          </RoundButton>
        </RoundRow>
        <FormBlock>
          <FormLine>
            <LineLabel $w={109}>Measurement #</LineLabel>
            <SelectBox>7<ChevronDown c="#aab0ac" /></SelectBox>
            <SquareButton>
              <IconSvg viewBox="0 0 24 24" $size={20}><path d="M20 10A8.5 8.5 0 0 0 5 7M4 14a8.5 8.5 0 0 0 15 3" fill="none" stroke="#c5cac7" strokeWidth="1.5" /><path d="M15 7h5V2M9 17H4v5" fill="none" stroke="#c5cac7" strokeWidth="1.5" /></IconSvg>
            </SquareButton>
          </FormLine>
          <FormLine>
            <LineLabel $w={91}>Result Name</LineLabel>
            <ReadBox $w={330}>Hammer Measurement</ReadBox>
          </FormLine>
        </FormBlock>
        <PanelHead $h={43} $pt={1}>
          <HeadTitle $w={201} $pt={3}>Measurement Properties</HeadTitle>
          <HeadIcon $w={58}><FloppyTreeIcon /></HeadIcon>
          <Spacer />
          <HeadIcon $w={25}><MinIcon /></HeadIcon>
          <HeadIcon $w={25}><MaxIcon /></HeadIcon>
          <HeadIcon $w={6} />
        </PanelHead>
        <PropsBody>
          <PropLine $h={30}><LineLabel $w={147}>Test Name</LineLabel>New Test</PropLine>
          <PropLine $h={30}><LineLabel $w={147}>Set-up name</LineLabel>New Test Set-up</PropLine>
          <PropLine $h={44} $mt={4}>
            <LineLabel $w={147}>Number of Averages</LineLabel>
            <LockSlot><LockIcon /></LockSlot>
            <ReadBox $w={249} $bg="#e9ebe9">3</ReadBox>
          </PropLine>
          <PropLine $h={16}>Reference</PropLine>
        </PropsBody>
        <PanelHead $h={42} $pt={2}>
          <HeadTitle $w={173} $pt={3}>Measurement Matrix</HeadTitle>
          <Spacer />
          <HeadIcon $w={30}><WrenchIcon /></HeadIcon>
          <HeadIcon $w={13} />
          <HeadIcon $w={25}><MinIcon /></HeadIcon>
          <HeadIcon $w={25}><MaxIcon /></HeadIcon>
          <HeadIcon $w={6} />
        </PanelHead>
        <Matrix>
          <Cell $c="1 / 3" $r="1 / 3" $bg="#a9b9b3" />
          <Cell $c="1" $r="3" $bg="#a9b9b3" $top>Data Name</Cell>
          <Cell $c="2" $r="3" $bg="#a9b9b3" $top>DOF</Cell>
          <Cell $c="3" $r="1 / 4" $left $align="flex-end" $pad="0 0 5px"><Vertical>References</Vertical></Cell>
          <Cell $c="4 / 8" $r="1">FFT System<Count>6</Count></Cell>
          <Cell $c="4" $r="2" $align="flex-end" $pad="0 0 3px"><Vertical>Auto-spectrum</Vertical><Count>2</Count></Cell>
          <Cell $c="5" $r="2" $align="flex-end" $pad="0 0 3px"><Vertical>Coherence</Vertical><Count>1</Count></Cell>
          <Cell $c="6" $r="2">H1<Count>1</Count></Cell>
          <Cell $c="7" $r="2" $align="flex-end" $pad="0 0 3px"><Vertical>Time</Vertical><Count>2</Count></Cell>
          <Cell $c="4" $r="3" $top><Count>2</Count></Cell>
          <Cell $c="5" $r="3" $top $start $pad="0 0 0 1px">7Z-<Count>1</Count></Cell>
          <Cell $c="6" $r="3" $top $start $pad="0 0 0 1px">7Z-<Count>1</Count></Cell>
          <Cell $c="7" $r="3" $top><Count>2</Count></Cell>
          <SideButton $r={1}>+</SideButton>
          <SideButton $r={2} $white>-</SideButton>
          <SideButton $r={3}>+</SideButton>

          <Cell $c="1" $r="4 / 6" $top $start $pad="0 0 0 2px">Hammer<Count>0</Count></Cell>
          <Cell $c="2" $r="4" $top $start $pad="0 0 0 1px">1Z-<Count>2</Count></Cell>
          <Cell $c="2" $r="5" $thin $start $pad="0 0 0 1px">7Z-<Count>0</Count></Cell>
          <Cell $c="1" $r="6" $top $start $pad="0 0 0 2px">Accel<Count>4</Count></Cell>
          <Cell $c="2" $r="6" $top $start $pad="0 0 0 1px">1Z+<Count>4</Count></Cell>

          <CheckCell $r={4} $top><CheckBox /></CheckCell>
          <ValueCell $c={4} $r={4} $top>1</ValueCell>
          <ValueCell $c={5} $r={4} $top $empty />
          <ValueCell $c={6} $r={4} $top $empty />
          <ValueCell $c={7} $r={4} $top>1</ValueCell>
          <CheckCell $r={5}><CheckBox><CheckTick /></CheckBox></CheckCell>
          <ValueCell $c={4} $r={5} $empty />
          <ValueCell $c={5} $r={5} $empty />
          <ValueCell $c={6} $r={5} $empty />
          <ValueCell $c={7} $r={5} $empty />
          <CheckCell $r={6} $top><CheckBox /></CheckCell>
          <ValueCell $c={4} $r={6} $top>1</ValueCell>
          <ValueCell $c={5} $r={6} $hit>1</ValueCell>
          <ValueCell $c={6} $r={6} $hit>1</ValueCell>
          <ValueCell $c={7} $r={6} $hit>1</ValueCell>

          <SideScroll>
            <svg width="14" height="8" viewBox="0 0 14 8"><path d="M1 7l6-6 6 6" fill="none" stroke="#d4d6d5" strokeWidth="1.5" /></svg>
            <svg width="14" height="8" viewBox="0 0 14 8"><path d="M1 1l6 6 6-6" fill="none" stroke="#d4d6d5" strokeWidth="1.5" /></svg>
          </SideScroll>
          <Filler />
          <BottomCell $c={1}>-</BottomCell>
          <BottomCell $c={2}>-</BottomCell>
          <BottomScroll>
            <svg width="8" height="14" viewBox="0 0 8 14"><path d="M7 1L1 7l6 6" fill="none" stroke="#d4d6d5" strokeWidth="1.5" /></svg>
            <svg width="8" height="14" viewBox="0 0 8 14"><path d="M1 1l6 6-6 6" fill="none" stroke="#d4d6d5" strokeWidth="1.5" /></svg>
          </BottomScroll>
          <Diamond><svg width="14" height="14" viewBox="0 0 14 14"><path d="M7 1l5 6-5 6-5-6z" fill="none" stroke="#222" strokeWidth="1.3" /></svg></Diamond>
        </Matrix>
      </LeftPanel>
      <RightArea>
        <DisplaysHead>
          <HeadTitle $w={174} $pl={9} $pt={2}>Measurement Displays</HeadTitle>
          <Compare>
            <svg width="21" height="20" viewBox="0 0 21 20"><path d="M10.5 0l3 7 7.500 .7-5.700 5 1.800 7.300-6.600-4-6.600 4 1.800-7.300-5.700-5 7.500-.7z" fill="#111" /></svg>
            <CompareText>1. Compare Traces - Function, DOFs and Units</CompareText>
            <ChevronDown c="#555" />
          </Compare>
          <Spacer />
          <HeadIcon $w={30}><WrenchIcon /></HeadIcon>
          <HeadIcon $w={13} />
          <HeadIcon $w={25}><MinIcon /></HeadIcon>
          <HeadIcon $w={25}><MaxIcon /></HeadIcon>
          <HeadIcon $w={8} />
        </DisplaysHead>
        <PanelRow $h={526} $top={4}>
          <Card>
            <CardHead><WideTitle $sp={0.47}>Coherence, (1Z+, 1Z-)</WideTitle><MaxIcon /></CardHead>
            <CoherenceChart />
          </Card>
          <Card>
            <CardHead><WideTitle $sp={0.75}>FRF, (1Z+, 1Z-), (m/s²)/N</WideTitle><MaxIcon /></CardHead>
            <FrfChart />
          </Card>
          <Card>
            <CardHead $pr={12}><WideTitle $sp={0.55}>Time, 1Z+, m/s²</WideTitle><MaxIcon /></CardHead>
            <TimeChart />
          </Card>
        </PanelRow>
        <MiddleHead>
          <HeadTitle $w={193} $pl={9} $pt={2}>Hammer Measurements</HeadTitle>
          <Spacer />
          <HeadIcon $w={30}><WrenchIcon /></HeadIcon>
          <HeadIcon $w={8} />
          <HeadIcon $w={30}><TwoWinIcon /></HeadIcon>
          <HeadIcon $w={14} />
          <HeadIcon $w={25}><MinIcon /></HeadIcon>
          <HeadIcon $w={25}><MaxIcon /></HeadIcon>
          <HeadIcon $w={8} />
        </MiddleHead>
        <MiddleBand />
        <PanelRow $h={237} $top={5}>
          <Card>
            <CardHead>Average Counter<MaxIcon /></CardHead>
            <BlackBody><BigCount>Lin: 3/3</BigCount></BlackBody>
          </Card>
          <Card>
            <CardHead>Signal Trigger<MaxIcon /></CardHead>
            <StateBody>
              <BigState>
                <StateLine>Averaging</StateLine>
                <StateLine>complete</StateLine>
              </BigState>
            </StateBody>
          </Card>
          <Card>
            <CardHead $active $pr={13}>Impact Validation<MaxIcon /></CardHead>
            <ImpactBody>
              <ImpactMain>
                <HitBar>Proper Hit</HitBar>
                <ImpactChart />
              </ImpactMain>
              <ImpactScroll>&gt;</ImpactScroll>
            </ImpactBody>
          </Card>
        </PanelRow>
      </RightArea>
    </Main>
    <StatusBar>
      <ShowLog>Show Log</ShowLog>
      <Spacer />
      <IconSvg viewBox="0 0 20 20" $size={20}><g fill="none" stroke="#666" strokeWidth="1.3"><ellipse cx="10" cy="4" rx="7.500" ry="2.500" /><path d="M2.500 4v12c0 3 15 3 15 0V4M2.500 8c0 3 15 3 15 0M2.500 12c0 3 15 3 15 0" /></g></IconSvg>
      <DbText>BKConnectDb (SQL Server - PULSE)</DbText>
      <PhoneSlot>
        <IconSvg viewBox="0 0 20 26" $size={24}><rect x="3" y="1" width="15" height="24" rx="3" fill="#fafafa" stroke="#555" strokeWidth="1.2" /><rect x="5" y="18" width="11" height="4" fill="#9aa6ba" /></IconSvg>
      </PhoneSlot>
      <Brand>Brüel &amp; Kjær</Brand>
      <LogoSvg viewBox="0 0 52 28">
        <path d="M0 11h9v8H0zM43 11h9v7h-9z" fill="#3f80c2" />
        <circle cx="26" cy="14" r="13" fill="#2f78c0" />
        <path d="M13 14h26M14.500 8h23M14.500 20h23M26 1v26M19 2.500c-4 7-4 16 0 23M33 2.500c4 7 4 16 0 23" stroke="#dff0ff" strokeWidth="0.8" fill="none" />
      </LogoSvg>
      <GripSlot>
        <svg width="14" height="14" viewBox="0 0 14 14"><g fill="#c5cbc7"><rect x="10" y="2" width="2" height="2" /><rect x="6" y="6" width="2" height="2" /><rect x="10" y="6" width="2" height="2" /><rect x="2" y="10" width="2" height="2" /><rect x="6" y="10" width="2" height="2" /><rect x="10" y="10" width="2" height="2" /></g></svg>
      </GripSlot>
    </StatusBar>
  </Root>
);

export default App;
